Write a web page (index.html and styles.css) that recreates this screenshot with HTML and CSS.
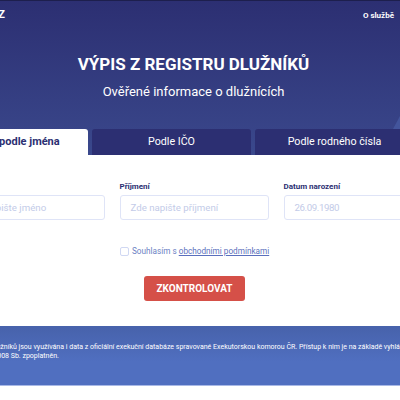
FILE: index.html
```html
<!DOCTYPE html>
<html lang="cs">
<head>
<meta charset="utf-8">
<title>Výpis z registru dlužníků</title>
<link rel="stylesheet" href="styles.css">
</head>
<body>
<div class="page">
  <header class="hero">
    <span class="hero-shape"></span>
    <nav class="nav">
      <span class="logo">REGISTR DLUŽNÍKŮ CZ</span>
      <a class="nav-link">O službě</a>
    </nav>
    <h1 class="title">VÝPIS Z REGISTRU DLUŽNÍKŮ</h1>
    <p class="subtitle">Ověřené informace o dlužnících</p>
    <div class="tabs">
      <div class="tab tab-active">Hledat podle jména</div>
      <div class="tab">Podle IČO</div>
      <div class="tab">Podle rodného čísla</div>
    </div>
  </header>
  <main class="form">
    <div class="fields">
      <label class="field"><span class="label">Jméno</span><span class="input">Zde napište jméno</span></label>
      <label class="field"><span class="label">Příjmení</span><span class="input">Zde napište příjmení</span></label>
      <label class="field"><span class="label">Datum narození</span><span class="input input-date">26.09.1980</span></label>
    </div>
    <div class="consent"><span class="checkbox"></span><span>Souhlasím s <a class="terms">obchodními podmínkami</a></span></div>
    <div class="submit-row"><button class="submit">ZKONTROLOVAT</button></div>
  </main>
  <section class="note">
    <p>Do registru dlužníků jsou využívána i data z oficiální exekuční databáze spravované Exekutorskou komorou ČR. Přístup k nim je na základě vyhlášky zákona č. 9/2008 Sb. zpoplatněn.</p>
  </section>
</div>
</body>
</html>
```
FILE: styles.css
```css
* { box-sizing: border-box; }
html, body { margin: 0; padding: 0; height: 100%; overflow: hidden; background: #fff; }
body { font-family: Roboto, "Noto Sans", sans-serif; }
.page { width: 400px; }
.hero {
  position: relative;
  height: 155px;
  border-top: 1px solid #1d1f4d;
  background: linear-gradient(180deg, #2c2f72 0%, #3a488c 100%);
  color: #fff;
  display: flex;
  flex-direction: column;
}
.hero-shape { position: absolute; right: 0; top: 115px; width: 7px; height: 13px; background: #43559c; clip-path: polygon(100% 0, 100% 100%, 0 100%); }
.nav { display: flex; justify-content: space-between; align-items: flex-start; height: 29px; padding: 8px 6px 0 0; }
.logo { font-size: 11px; line-height: 11px; font-weight: 700; margin-left: -111px; white-space: nowrap; }
.nav-link { font-size: 8px; line-height: 12px; font-weight: 700; margin-top: 1px; }
.title { margin: 21px 0 0; height: 26px; font-size: 17px; line-height: 26px; font-weight: 700; text-align: center; width: 387px; white-space: nowrap; }
.subtitle { margin: 5px 0 0; font-size: 13px; line-height: 20px; text-align: center; width: 387px; }
.tabs { display: flex; gap: 4px; margin: auto 0 0 -71px; width: 485px; height: 26px; }
.tab { flex: 0 0 159px; background: #2c2f72; border-radius: 3px 3px 0 0; font-size: 10.7px; line-height: 26px; text-align: center; white-space: nowrap; }
.tab-active { background: #fff; color: #2c2f72; font-weight: 700; font-size: 11px; padding-left: 6.6px; }
.form { height: 171px; padding-top: 26px; }
.fields { display: flex; gap: 15px; width: 477px; margin-left: -44.5px; }
.field { flex: 1; display: flex; flex-direction: column; }
.label { font-size: 8px; line-height: 12px; font-weight: 700; color: #2c2f72; margin-bottom: 2px; }
.input { height: 25px; border: 1px solid #dfe4f7; border-radius: 3px; padding-left: 10px; font-size: 9.7px; line-height: 23px; color: #c3cbe8; white-space: nowrap; }
.input-date { letter-spacing: -.4px; }
.consent { display: flex; align-items: center; margin: 25px 0 0 120px; font-size: 8.2px; color: #6c7fc4; height: 12px; }
.checkbox { flex: none; width: 9px; height: 9px; border: 1px solid #d0d8f3; border-radius: 2px; margin-right: 3px; }
.terms { text-decoration: underline; color: #5a6fbd; }
.submit-row { margin: 19px 0 0 144px; }
.submit { display: block; width: 101px; height: 25px; padding: 0; border: 0; border-radius: 3px; background: #d55048; color: #fff; font-family: inherit; font-size: 10px; font-weight: 700; }
.note {
  height: 60px;
  border-bottom: 1px solid #a9b9e6;
  background: linear-gradient(180deg, #4762ab 0%, #506fc0 60%);
  color: #fff;
  font-size: 7px;
  line-height: 9px;
  padding: 17px 0 0;
}
.note p { margin: 0 0 0 -45px; width: 465px; }
```
